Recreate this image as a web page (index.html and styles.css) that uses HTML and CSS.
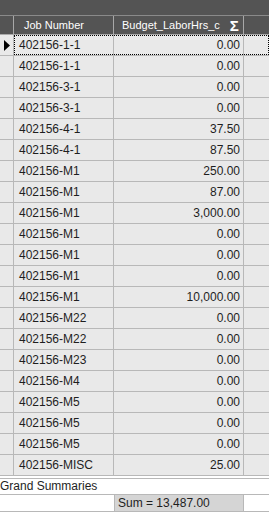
FILE: index.html
```html
<!DOCTYPE html>
<html>
<head>
<meta charset="utf-8">
<link rel="stylesheet" href="styles.css">
</head>
<body>
<div class="grid">
  <div class="topbar"></div>
  <div class="row head">
    <div class="ind"></div>
    <div class="cells">
      <div class="c job">Job Number</div>
      <div class="c bud">Budget_LaborHrs_c<span class="sigma">Σ</span></div>
      <div class="c rest"></div>
    </div>
  </div>
  <div class="row cur">
    <div class="ind"><svg width="6" height="11" viewBox="0 0 6 11"><path d="M0 0 L6 5.5 L0 11 Z" fill="#000"/></svg></div>
    <div class="cells"><div class="c job">402156-1-1</div><div class="c bud">0.00</div><div class="c rest"></div></div>
  </div>
  <div class="row"><div class="ind"></div><div class="cells"><div class="c job">402156-1-1</div><div class="c bud">0.00</div><div class="c rest"></div></div></div>
  <div class="row"><div class="ind"></div><div class="cells"><div class="c job">402156-3-1</div><div class="c bud">0.00</div><div class="c rest"></div></div></div>
  <div class="row"><div class="ind"></div><div class="cells"><div class="c job">402156-3-1</div><div class="c bud">0.00</div><div class="c rest"></div></div></div>
  <div class="row"><div class="ind"></div><div class="cells"><div class="c job">402156-4-1</div><div class="c bud">37.50</div><div class="c rest"></div></div></div>
  <div class="row"><div class="ind"></div><div class="cells"><div class="c job">402156-4-1</div><div class="c bud">87.50</div><div class="c rest"></div></div></div>
  <div class="row"><div class="ind"></div><div class="cells"><div class="c job">402156-M1</div><div class="c bud">250.00</div><div class="c rest"></div></div></div>
  <div class="row"><div class="ind"></div><div class="cells"><div class="c job">402156-M1</div><div class="c bud">87.00</div><div class="c rest"></div></div></div>
  <div class="row"><div class="ind"></div><div class="cells"><div class="c job">402156-M1</div><div class="c bud">3,000.00</div><div class="c rest"></div></div></div>
  <div class="row"><div class="ind"></div><div class="cells"><div class="c job">402156-M1</div><div class="c bud">0.00</div><div class="c rest"></div></div></div>
  <div class="row"><div class="ind"></div><div class="cells"><div class="c job">402156-M1</div><div class="c bud">0.00</div><div class="c rest"></div></div></div>
  <div class="row"><div class="ind"></div><div class="cells"><div class="c job">402156-M1</div><div class="c bud">0.00</div><div class="c rest"></div></div></div>
  <div class="row"><div class="ind"></div><div class="cells"><div class="c job">402156-M1</div><div class="c bud">10,000.00</div><div class="c rest"></div></div></div>
  <div class="row"><div class="ind"></div><div class="cells"><div class="c job">402156-M22</div><div class="c bud">0.00</div><div class="c rest"></div></div></div>
  <div class="row"><div class="ind"></div><div class="cells"><div class="c job">402156-M22</div><div class="c bud">0.00</div><div class="c rest"></div></div></div>
  <div class="row"><div class="ind"></div><div class="cells"><div class="c job">402156-M23</div><div class="c bud">0.00</div><div class="c rest"></div></div></div>
  <div class="row"><div class="ind"></div><div class="cells"><div class="c job">402156-M4</div><div class="c bud">0.00</div><div class="c rest"></div></div></div>
  <div class="row"><div class="ind"></div><div class="cells"><div class="c job">402156-M5</div><div class="c bud">0.00</div><div class="c rest"></div></div></div>
  <div class="row"><div class="ind"></div><div class="cells"><div class="c job">402156-M5</div><div class="c bud">0.00</div><div class="c rest"></div></div></div>
  <div class="row"><div class="ind"></div><div class="cells"><div class="c job">402156-M5</div><div class="c bud">0.00</div><div class="c rest"></div></div></div>
  <div class="row"><div class="ind"></div><div class="cells"><div class="c job">402156-MISC</div><div class="c bud">25.00</div><div class="c rest"></div></div></div>
  <div class="gs">Grand Summaries</div>
  <div class="sumrow">
    <div class="s-left"></div>
    <div class="s-sum">Sum = 13,487.00</div>
    <div class="s-rest"></div>
  </div>
</div>
</body>
</html>
```
FILE: styles.css
```css
html, body {
  margin: 0;
  padding: 0;
  background: #ffffff;
}
.grid {
  width: 269px;
  font-family: "Liberation Sans", Arial, sans-serif;
  font-size: 12px;
  color: #1e1e1e;
}
.topbar {
  height: 15px;
  background: #545454;
  border-bottom: 1px solid #8a8a8a;
}
.row {
  display: flex;
  height: 20px;
  border-bottom: 1px solid #b8b8b8;
  background: #e9e9e9;
}
.ind {
  width: 13px;
  border-right: 1px solid #b8b8b8;
  display: flex;
  align-items: center;
  padding-left: 4px;
  box-sizing: border-box;
  width: 14px;
}
.cells {
  display: flex;
  flex: 1;
}
.c {
  display: flex;
  align-items: center;
  box-sizing: border-box;
  white-space: nowrap;
  overflow: hidden;
}
.job {
  width: 100px;
  border-right: 1px solid #b8b8b8;
  padding-left: 5px;
}
.bud {
  width: 130px;
  border-right: 1px solid #b8b8b8;
  justify-content: flex-end;
  padding-right: 3px;
}
.rest {
  flex: 1;
}
.cur .cells {
  outline: 1px dotted #000;
  outline-offset: -1px;
}
.head {
  height: 18px;
  background: #545454;
  border-bottom: 1px solid #aaaaaa;
  color: #ffffff;
  font-size: 11px;
}
.head .ind,
.head .job,
.head .bud {
  border-right-color: #a8a8a8;
}
.head .job {
  padding-left: 10px;
}
.head .bud {
  justify-content: flex-start;
  padding-left: 8px;
  padding-right: 0;
}
.sigma {
  font-weight: bold;
  font-size: 15px;
  margin-left: 10px;
  line-height: 1;
}
.gs {
  margin-top: 2px;
  border-top: 1px solid #b8b8b8;
  border-bottom: 1px solid #b8b8b8;
  height: 15px;
  line-height: 15px;
  background: #ffffff;
}
.sumrow {
  display: flex;
  height: 16px;
  border-bottom: 1px solid #b8b8b8;
}
.s-left {
  width: 114px;
}
.s-sum {
  width: 130px;
  box-sizing: border-box;
  background: #d5d5d5;
  border-left: 1px solid #b8b8b8;
  border-right: 1px solid #b8b8b8;
  padding-left: 3px;
  line-height: 16px;
}
.s-rest {
  flex: 1;
}
```
